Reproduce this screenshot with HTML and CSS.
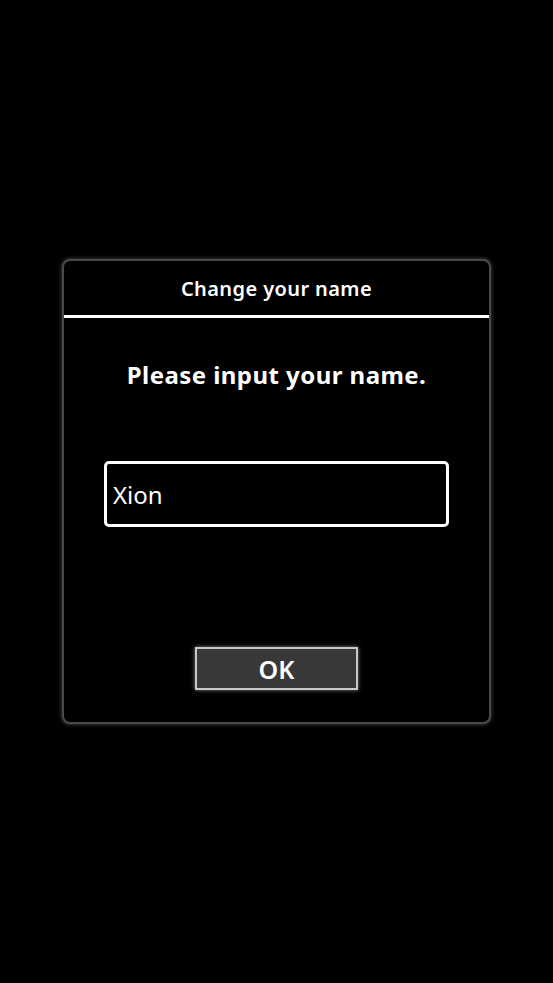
FILE: index.html
```html
<!DOCTYPE html>
<html lang="en">
<head>
    <meta charset="UTF-8">
    <meta name="viewport" content="width=device-width, initial-scale=1.0">
    <title>Change your name</title>
    <link rel="stylesheet" href="styles.css">
</head>
<body>
    <div class="dialog">
        <div class="dialog-header">Change your name</div>
        <div class="dialog-body">
            <p class="prompt">Please input your name.</p>
            <div class="name-field">Xion</div>
            <button class="ok-btn">OK</button>
        </div>
    </div>
</body>
</html>
```

FILE: styles.css
```css
html, body {
    margin: 0;
    padding: 0;
    background: #000;
}
body {
    height: 983px;
    display: flex;
    align-items: center;
    justify-content: center;
    font-family: "Noto Sans", "DejaVu Sans", sans-serif;
    color: #fff;
}
.dialog {
    width: 425px;
    height: 461px;
    border: 2px solid #4a4a4a;
    border-radius: 8px;
    background: #000;
    box-shadow: 0 0 4px rgba(180, 180, 180, 0.45);
    display: flex;
    flex-direction: column;
}
.dialog-header {
    height: 54px;
    border-bottom: 3px solid #fff;
    display: flex;
    align-items: center;
    justify-content: center;
    font-size: 20px;
    font-weight: 600;
    letter-spacing: 0.4px;
}
.dialog-body {
    flex: 1;
    display: flex;
    flex-direction: column;
    align-items: center;
    padding: 0 40px;
}
.prompt {
    margin: 42px 0 0;
    font-size: 24px;
    font-weight: 700;
    line-height: 30px;
    letter-spacing: 0.45px;
}
.name-field {
    box-sizing: border-box;
    align-self: stretch;
    margin-top: 71px;
    height: 66px;
    border: 3px solid #fff;
    border-radius: 5px;
    padding: 0 6px;
    display: flex;
    align-items: center;
    font-size: 24px;
}
.ok-btn {
    margin-top: 120px;
    width: 163px;
    height: 43px;
    background: #383838;
    border: 2px solid #c8c8c8;
    box-shadow: 0 0 4px rgba(220, 220, 220, 0.6);
    color: #fff;
    font-family: inherit;
    font-size: 25px;
    font-weight: 600;
    padding: 0;
}
```
